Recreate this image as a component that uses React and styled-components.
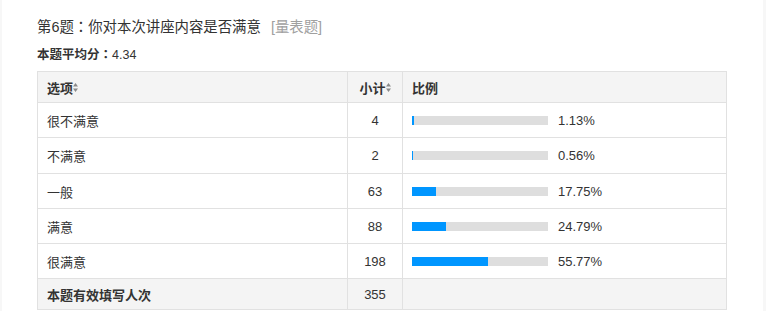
import React from "react";
import styled, { createGlobalStyle } from "styled-components";

const Global = createGlobalStyle`
  html, body { margin: 0; padding: 0; background: #f7f7f7; }
  body { font-family: "Liberation Sans", "Noto Sans CJK SC", sans-serif; color: #333; }
`;

const Panel = styled.div`
  margin-left: 2px;
  width: 761px;
  height: 311px;
  background: #fff;
  box-sizing: border-box;
  padding: 17px 0 0 35px;
`;

const Title = styled.div`
  font-size: 14.4px;
  height: 20px;
  line-height: 20px;
  color: #333;
  display: flex;
  align-items: center;
`;

const Colon = styled.span`
  font-family: "Noto Sans CJK JP", "Noto Sans CJK SC", sans-serif;
  line-height: 1;
`;

const Tag = styled.span`
  color: #a0a0a0;
  margin-left: 10px;
`;

const Avg = styled.div`
  margin-top: 8px;
  height: 20px;
  font-size: 12.5px;
  line-height: 20px;
  color: #333;
  display: flex;
  align-items: center;
`;

const AvgLabel = styled.b`
  font-weight: bold;
`;

const Grid = styled.div`
  margin-top: 6px;
  display: grid;
  grid-template-columns: 310px 55px 324px;
  width: 690px;
  box-sizing: border-box;
  border-top: 1px solid #e1e1e1;
  border-left: 1px solid #e1e1e1;
  font-size: 13px;
`;

const Cell = styled.div`
  box-sizing: border-box;
  height: ${(p) => p.$h}px;
  border-right: 1px solid #e1e1e1;
  border-bottom: 1px solid #e1e1e1;
  background: ${(p) => (p.$shade ? "#f4f4f4" : "#fff")};
  font-weight: ${(p) => (p.$bold ? "bold" : "normal")};
  display: flex;
  align-items: center;
  justify-content: ${(p) => (p.$center ? "center" : "flex-start")};
  padding-left: ${(p) => (p.$center ? 0 : 9)}px;
  color: #333;
  white-space: nowrap;
`;

const Sort = styled.svg`
  width: 5px;
  height: 9px;
  margin-left: 0;
  margin-top: 1px;
`;

const Track = styled.div`
  width: 136px;
  height: 9px;
  background: #dedede;
  flex: none;
`;

const Fill = styled.div`
  height: 100%;
  background: #0096ff;
`;

const Pct = styled.span`
  margin-left: 10px;
`;

const SortIcon = () => (
  <Sort viewBox="0 0 5 9">
    <path d="M2.5 0 L5 3.6 L0 3.6 Z" fill="#8a8a8a" />
    <path d="M2.5 9 L5 5.4 L0 5.4 Z" fill="#8a8a8a" />
  </Sort>
);

const rows = [
  { label: "很不满意", count: 4, pct: 1.13, h: 35 },
  { label: "不满意", count: 2, pct: 0.56, h: 36 },
  { label: "一般", count: 63, pct: 17.75, h: 35 },
  { label: "满意", count: 88, pct: 24.79, h: 35 },
  { label: "很满意", count: 198, pct: 55.77, h: 35 },
];

export default function App() {
  return (
    <>
      <Global />
      <Panel>
        <Title>
          <span>
            第6题<Colon>：</Colon>你对本次讲座内容是否满意
          </span>
          <Tag>[量表题]</Tag>
        </Title>
        <Avg>
          <AvgLabel>
            本题平均分<Colon>：</Colon>
          </AvgLabel>
          <span>4.34</span>
        </Avg>
        <Grid>
          <Cell $h={31} $shade $bold>
            选项<SortIcon />
          </Cell>
          <Cell $h={31} $shade $bold $center>
            小计<SortIcon />
          </Cell>
          <Cell $h={31} $shade $bold>
            比例
          </Cell>
          {rows.map((r) => (
            <React.Fragment key={r.label}>
              <Cell $h={r.h}>{r.label}</Cell>
              <Cell $h={r.h} $center>
                {r.count}
              </Cell>
              <Cell $h={r.h}>
                <Track>
                  <Fill style={{ width: Math.max(1, Math.round((136 * r.pct) / 100)) + "px" }} />
                </Track>
                <Pct>{r.pct.toFixed(2)}%</Pct>
              </Cell>
            </React.Fragment>
          ))}
          <Cell $h={31} $shade $bold>
            本题有效填写人次
          </Cell>
          <Cell $h={31} $shade $center>
            355
          </Cell>
          <Cell $h={31} $shade />
        </Grid>
      </Panel>
    </>
  );
}
